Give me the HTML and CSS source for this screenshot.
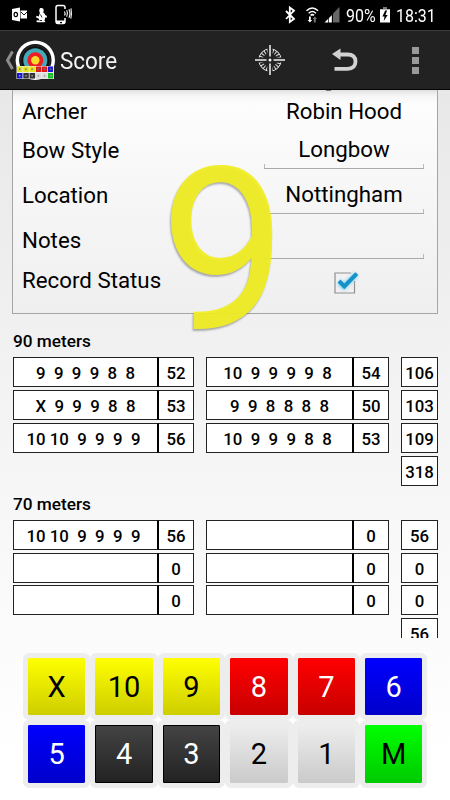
FILE: index.html
```html
<!DOCTYPE html>
<html lang="en">
<head>
<meta charset="utf-8">
<title>Score</title>
<link rel="stylesheet" href="styles.css">
</head>
<body>
<div class="status">
  <svg class="status-left" width="80" height="30" viewBox="0 0 80 30">
    <path fill="#fff" d="M12 9l8-1.5v14L12 20z"/>
    <path fill="#fff" d="M20.500 10.500h6.500v8h-6.500z"/>
    <path d="M21 12l3 3 3-3" fill="none" stroke="#000" stroke-width=".9"/>
    <ellipse cx="15.800" cy="14.500" rx="1.700" ry="2.200" fill="none" stroke="#000" stroke-width="1.200"/>
    <path fill="#fff" d="M40 8.200c2-.8 3.500 0 3.700 1.700.1 1.200-.5 1.800-.5 2.600 1.300.8 1.800 1.600 2 2.600l1.800 1-.4 1.600-1.600-.3c.2 1.200-.1 2.200-.7 3l1.200.8-1 1h-7.200l-1.300-1.200 1.600-.8 1.300.4c.3-1 .2-1.500-.3-2.200l-2.500-1 .4-1.600 2.300.6c.3-1.400.6-2.300 1.200-3.300-.9-1.400-1-4 0-4.900z"/>
    <path d="M40.500 14.500l1.500 3M39.500 20.500h2.500" stroke="#000" stroke-width=".8"/>
    <path fill="none" stroke="#fff" stroke-width="1.500" d="M65 9V7.500q0-2-2-2h-5q-2 0-2 2v14q0 2 2 2h5q2 0 2-2V18"/>
    <path fill="#fff" d="M56 20.500h9v3h-9z"/><path fill="#000" d="M60 22h2v1.200h-2z"/>
    <path fill="none" stroke="#fff" stroke-width="1.100" d="M64.500 11.500q1.200 2 0 4M66.700 10.300q1.700 3.200 0 6.400M68.900 9.200q2 4.300 0 8.600M71 8.300q.9 5.200-.2 10.400"/>
  </svg>
  <svg class="status-icons" width="62" height="30" viewBox="0 0 62 30">
    <path fill="none" stroke="#fff" stroke-width="1.800" d="M2 11l8 8-4.200 3V7.500l4.200 3.200-8 8.300"/>
    <path fill="none" stroke="#fff" stroke-width="1.500" d="M22.500 10.800q5.800-5.600 11.600 0M24.700 13.200q3.600-3.400 7.200 0M26.600 15.400q1.700-1.500 3.400 0"/>
    <path fill="#fff" d="M25 16.500h1.800V20h1.400l-2.300 2.500-2.300-2.500H25z"/>
    <path fill="#777" d="M29.800 22.500V19h-1.200l2.200-2.500L33 19h-1.300v3.500z"/>
    <path fill="#666" d="M55.500 7v15.500H49V13.500z"/><path fill="#fff" d="M40.500 22.500L48 15v7.500z"/>
    <path stroke="#000" stroke-width=".7" d="M44.500 17v6M48.300 14v9"/>
  </svg>
  <span class="battery-text">90%</span>
  <svg class="battery" width="10" height="30" viewBox="0 0 10 30">
    <path fill="#777" d="M3 7h4v2h3v2H0V9h3z"/><path fill="#fff" d="M0 9.500h10v13H0z"/>
    <path fill="#000" d="M5.200 10.500L2.400 16.600h2.100l-.8 4.400 4-6H5.400l1.700-4.500z"/>
  </svg>
  <span class="clock">18:31</span>
</div>

<div class="bar">
  <svg class="logo" width="52" height="59" viewBox="0 0 52 59">
    <path d="M12.500 20.500L7.500 29.200l5 8.800" fill="none" stroke="#8c8c8c" stroke-width="3"/>
    <circle cx="35.300" cy="29.300" r="19.700" fill="#fff"/>
    <circle cx="35.300" cy="29.300" r="16.200" fill="#111"/>
    <circle cx="35.300" cy="29.300" r="14.800" fill="none" stroke="#555" stroke-width=".4"/>
    <circle cx="35.300" cy="29.300" r="12" fill="#45a9b8"/>
    <circle cx="35.300" cy="29.300" r="8" fill="#ee1c24"/>
    <circle cx="35.300" cy="29.300" r="4.200" fill="#f5dc2d"/>
    <path fill="#eee" d="M16.500 35h37.500v13H16.500z"/>
    <path fill="#e3e31c" d="M17 35.500h5.500v5.500H17zM23.300 35.500h5.500v5.500h-5.500zM29.600 35.500h5.500v5.500h-5.500z"/>
    <path fill="#e01818" d="M35.900 35.500h5.500v5.500h-5.500zM42 35.500h5.300v5.500H42z"/>
    <path fill="#1717d8" d="M48 35.500h5v5.500h-5zM17 42h5.500v5.500H17z"/>
    <path fill="#333" d="M23.300 42h5.500v5.500h-5.500zM29.600 42h5.500v5.500h-5.500z"/>
    <path fill="#ddd" d="M35.900 42h5.500v5.500h-5.500zM42 42h5.300v5.500H42z"/>
    <path fill="#10c820" d="M48 42h5v5.500h-5z"/>
    <path stroke="#777" stroke-width="1.500" stroke-dasharray="1.500 4.700" d="M19 38.300h34"/>
    <path stroke="#999" stroke-width="1.500" stroke-dasharray="1.500 4.700" d="M19 44.800h34"/>
  </svg>
  <h1>Score</h1>
  <svg class="target" width="32" height="32" viewBox="0 0 32 32">
    <circle cx="16" cy="16" r="11.200" fill="none" stroke="#e8e8e8" stroke-width="1"/>
    <circle cx="16" cy="16" r="9" fill="none" stroke="#ddd" stroke-width="4" stroke-dasharray="1 1.800"/>
    <path stroke="#222" stroke-width="5" d="M16 3v26M3 16h26"/>
    <path stroke="#f4f4f4" stroke-width="1.500" d="M16 1v11.500M16 19.500V31M1 16h11.500M19.500 16H31"/>
    <circle cx="16" cy="16" r="1.500" fill="#f4f4f4"/>
  </svg>
  <svg class="undo" width="30" height="28" viewBox="0 0 30 28">
    <path d="M8 8.500h9.500q8 0 8 7t-8 7.300H4.500" fill="none" stroke="#d2d2d2" stroke-width="3.800"/>
    <path fill="#d2d2d2" d="M2 8L10.500 2.500v11.500z"/>
  </svg>
  <div class="more"><i></i><i></i><i></i></div>
</div>

<main>
  <section class="card">
    <div class="above"></div>
    <div class="row"><span>Archer</span><span class="value">Robin Hood</span></div>
    <div class="row"><span>Bow Style</span><span class="value field">Longbow</span></div>
    <div class="row tall"><span>Location</span><span class="value field">Nottingham</span></div>
    <div class="row"><span>Notes</span><span class="value field"></span></div>
    <div class="row last"><span>Record Status</span><span class="value">
      <svg class="check" width="34" height="34" viewBox="0 0 34 34">
        <defs><filter id="glow" x="-50%" y="-50%" width="200%" height="200%"><feGaussianBlur stdDeviation="1.800"/></filter></defs>
        <path d="M23 8H7v20h19.500V16" fill="none" stroke="#909090" stroke-width="1.200"/>
        <path d="M11 17l5 4.500L28.500 9" fill="none" stroke="#8fd3f0" stroke-width="6" filter="url(#glow)"/>
        <path d="M11 16l5.300 5.300L28.800 8.600" fill="none" stroke="#1292c8" stroke-width="4"/>
      </svg></span></div>
  </section>

  <h2>90 meters</h2>
  <section class="scores">
    <div class="end"><b>9  9  9  9  8  8</b><b>52</b></div><div class="end"><b class="ten">10  9  9  9  9  8</b><b>54</b></div><div class="sum">106</div>
    <div class="end"><b>X  9  9  9  8  8</b><b>53</b></div><div class="end"><b>9  9  8  8  8  8</b><b>50</b></div><div class="sum">103</div>
    <div class="end"><b class="ten">10 10  9  9  9  9</b><b>56</b></div><div class="end"><b class="ten">10  9  9  9  8  8</b><b>53</b></div><div class="sum">109</div>
    <div class="sum total">318</div>
  </section>

  <h2>70 meters</h2>
  <section class="scores">
    <div class="end"><b class="ten">10 10  9  9  9  9</b><b>56</b></div><div class="end"><b></b><b>0</b></div><div class="sum">56</div>
    <div class="end"><b></b><b>0</b></div><div class="end"><b></b><b>0</b></div><div class="sum">0</div>
    <div class="end"><b></b><b>0</b></div><div class="end"><b></b><b>0</b></div><div class="sum">0</div>
    <div class="sum total">56</div>
  </section>
</main>

<div class="pad">
  <button class="yellow">X</button><button class="yellow">10</button><button class="yellow">9</button><button class="red">8</button><button class="red">7</button><button class="blue">6</button>
  <button class="blue">5</button><button class="black">4</button><button class="black">3</button><button class="white">2</button><button class="white">1</button><button class="green">M</button>
</div>
<div class="toast">9</div>
</body>
</html>
```
FILE: styles.css
```css
* { box-sizing: border-box; }
body {
  margin: 0;
  width: 450px;
  height: 800px;
  overflow: hidden;
  position: relative;
  font-family: Roboto, "Liberation Sans", sans-serif;
  color: #000;
  background: linear-gradient(#e8e8e8 90px, #f1f1f1 340px, #f7f7f7 510px, #fff 760px);
}
svg { display: block; flex: none; }
.status {
  height: 30px;
  background: #000;
  color: #fff;
  display: flex;
  align-items: center;
  font-size: 19px;
}
.status-icons { margin-left: 204px; }
.battery-text, .clock { transform-origin: left; transform: scaleX(.84); }
.battery-text { width: 31px; }
.battery { margin-left: 3px; }
.clock { margin-left: 6px; }
.bar {
  height: 60px;
  background: #222;
  border-top: 1px solid #3c3c3c;
  border-bottom: 1px solid #050505;
  display: flex;
  align-items: center;
}
.logo { overflow: visible; }
h1 {
  margin: 2px 0 0 8px;
  width: 60px;
  font-size: 24px;
  line-height: 30px;
  font-weight: 400;
  color: #f3f3f3;
  transform-origin: left;
  transform: scaleX(.935);
}
.target { margin-left: 134px; }
.undo { margin-left: 44px; margin-top: 0; }
.more { margin-left: 52px; display: grid; gap: 3px; }
.more i { width: 7px; height: 7px; background: #999; }
main { height: 548px; overflow: hidden; padding: 0 12px; }
.card {
  height: 224px;
  border: 1px solid #a5a5a5;
  border-top: 0;
  padding: 0 13px 0 9px;
  background: linear-gradient(#e0e0e0, #f6f6f6 6px, #fdfdfd 14px, #f6f6f6 110px, #efefef);
  font-size: 22.300px;
}
.above { height: 2px; }
.above::before { content: ""; display: block; width: 5px; height: 1px; margin-left: 304px; background: #777; }
.row { height: 39px; display: flex; align-items: center; justify-content: space-between; }
.row.tall { height: 51px; }
.row.last { height: 41px; }
.row:nth-child(2) { height: 38px; }
.value { width: 160px; height: 38px; display: flex; align-items: center; justify-content: center; }
.field {
  border-bottom: 1px solid #aaa;
  background: linear-gradient(#bbb, #bbb) left bottom / 1px 4px no-repeat, linear-gradient(#bbb, #bbb) right bottom / 1px 4px no-repeat;
}
.check { margin-top: 4px; margin-left: 2px; }
h2 { margin: 17px 0 5px 1px; font-size: 17.200px; line-height: 21px; font-weight: 500; }
.scores {
  display: grid;
  grid-template-columns: 181px 183px 37px;
  column-gap: 12px;
  row-gap: 3px;
  margin-left: 1px;
  font-size: 16.800px;
  font-weight: 500;
}
.end { display: flex; }
.end b, .sum {
  height: 30px;
  background: #fff;
  border: 1px solid #222;
  display: flex;
  align-items: center;
  justify-content: center;
  white-space: pre;
  font-weight: 500;
  padding-top: 2px;
}
.end b:first-child { flex: 1; border-right-color: #000; }
.end b:last-child { width: 36px; border-left-color: #000; }
.end .ten { padding-right: 4px; }
.total { grid-column: 3; }
.scores + h2 { margin-top: 8px; margin-bottom: 5px; }
h2 + .scores:last-child { row-gap: 2.700px; }
.pad {
  margin: 15px 0 0 23px;
  width: 404.400px;
  display: grid;
  grid-template-columns: repeat(6, 1fr);
  grid-auto-rows: 67.300px;
}
.pad button {
  font: 400 29px Roboto, sans-serif;
  padding: 1px 0 0;
  border: 5px solid #ededed;
  border-radius: 6px;
  background-clip: padding-box;
  color: #000;
}
.pad .yellow { background-image: linear-gradient(#ff0, #cece00); }
.pad .red { background-image: linear-gradient(#f00, #c80000); color: #fff; }
.pad .blue { background-image: linear-gradient(#00f, #0000ca); color: #fff; }
.pad .black { background-image: linear-gradient(#444, #222); color: #fff; box-shadow: inset 0 0 0 1px #000; }
.pad .white { background-image: linear-gradient(#ededed, #cacaca); }
.pad .green { background-image: linear-gradient(#0f0, #00ca00); }
.toast {
  position: absolute;
  left: 160px;
  top: 100px;
  font: 400 226px/304px Roboto, sans-serif;
  color: rgba(240, 238, 35, .94);
  text-shadow: -1px 2px 2px rgba(0, 0, 0, .3);
}
```
